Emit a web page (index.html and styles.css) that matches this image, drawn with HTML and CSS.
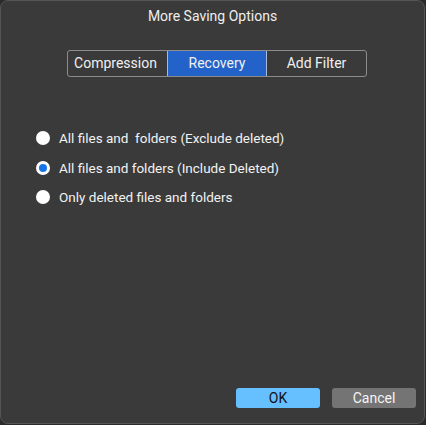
FILE: index.html
```html
<!DOCTYPE html>
<html>
<head>
<meta charset="utf-8">
<link rel="stylesheet" href="styles.css">
</head>
<body>
<div class="dialog">
  <div class="title">More Saving Options</div>
  <div class="tabs">
    <div class="tab">Compression</div>
    <div class="tab active">Recovery</div>
    <div class="tab">Add Filter</div>
  </div>
  <div class="options">
    <label class="opt"><span class="radio"></span><span>All files and&nbsp; folders (Exclude deleted)</span></label>
    <label class="opt"><span class="radio checked"></span><span>All files and folders (Include Deleted)</span></label>
    <label class="opt"><span class="radio"></span><span>Only deleted files and folders</span></label>
  </div>
  <div class="spacer"></div>
  <div class="buttons">
    <div class="btn ok">OK</div>
    <div class="btn cancel">Cancel</div>
  </div>
</div>
</body>
</html>
```
FILE: styles.css
```css
html, body {
  margin: 0;
  padding: 0;
  background: #2b2b2b;
}
body {
  width: 426px;
  height: 425px;
  font-family: Roboto, "Liberation Sans", sans-serif;
  color: #ececec;
}
.dialog {
  box-sizing: border-box;
  width: 425px;
  height: 424px;
  border: 1px solid #555555;
  border-radius: 8px;
  background: #3a3a3a;
  display: flex;
  flex-direction: column;
  align-items: stretch;
}
.title {
  text-align: center;
  font-size: 14px;
  margin-top: 7px;
  line-height: 17px;
  color: #eeeeee;
}
.tabs {
  display: flex;
  align-self: flex-start;
  margin-left: 66px;
  margin-top: 25px;
  border: 1px solid #8c8c8c;
  border-radius: 3px;
  overflow: hidden;
}
.tab {
  width: 99px;
  height: 25px;
  line-height: 25px;
  text-align: center;
  font-size: 14px;
  color: #f0f0f0;
  border-left: 1px solid #8c8c8c;
}
.tab:first-child {
  border-left: none;
  text-indent: -4px;
}
.tab.active {
  background: #2363c9;
  border-left: 1px solid #a8b8d8;
  border-right: 1px solid #a8b8d8;
  width: 98px;
}
.tab.active + .tab {
  border-left: none;
}
.options {
  display: flex;
  flex-direction: column;
  gap: 11.5px;
  margin-top: 52px;
  margin-left: 35px;
}
.opt {
  display: flex;
  align-items: center;
  gap: 9px;
  font-size: 13.5px;
  line-height: 18px;
  color: #f2f2f2;
}
.radio {
  box-sizing: border-box;
  width: 14px;
  height: 14px;
  border-radius: 50%;
  background: #ffffff;
  display: flex;
  align-items: center;
  justify-content: center;
}
.radio.checked::after {
  content: "";
  width: 8px;
  height: 8px;
  border-radius: 50%;
  background: #1774e8;
}
.spacer {
  flex: 1;
}
.buttons {
  display: flex;
  justify-content: flex-end;
  gap: 12px;
  margin-right: 8px;
  margin-bottom: 15px;
}
.btn {
  width: 84px;
  height: 20px;
  line-height: 20px;
  text-align: center;
  font-size: 14px;
  border-radius: 3px;
}
.btn.ok {
  background: #66bfff;
  color: #111111;
}
.btn.cancel {
  background: #747474;
  color: #f4f4f4;
}
```
